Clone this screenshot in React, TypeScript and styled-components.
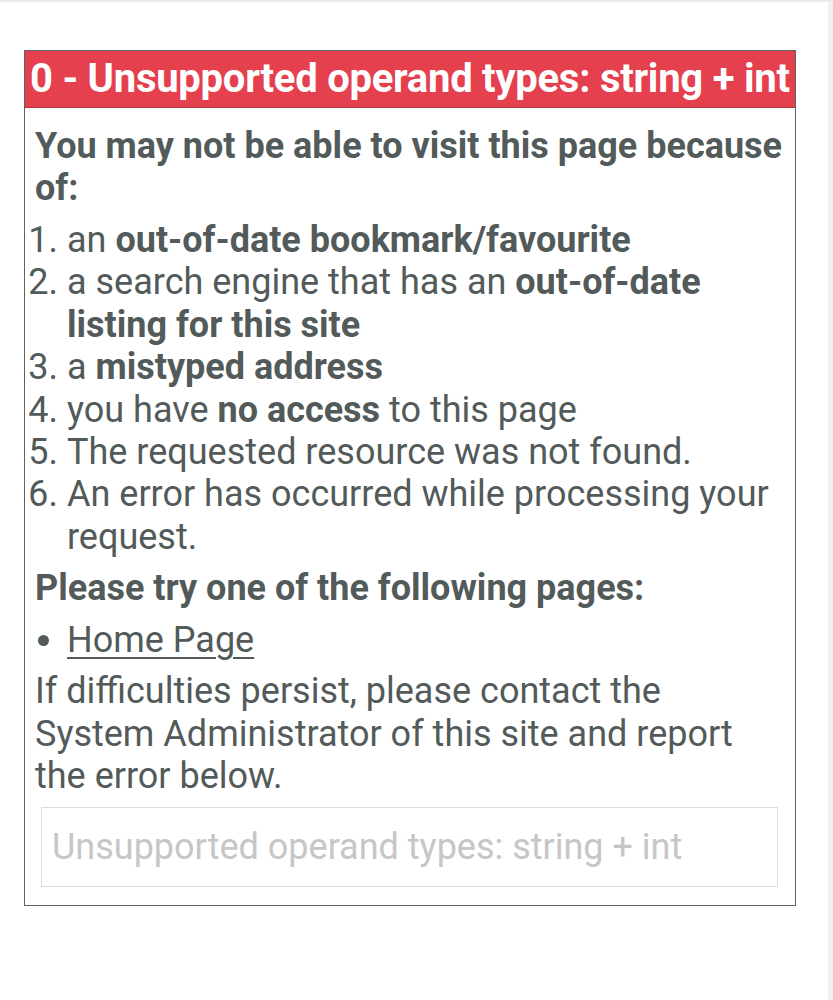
import styled, { createGlobalStyle } from 'styled-components';

const GlobalStyle = createGlobalStyle`
  html, body {
    margin: 0;
    padding: 0;
    background: #ffffff;
  }
  body {
    font-family: Roboto, "Liberation Sans", sans-serif;
  }
`;

const Page = styled.div`
  display: flex;
  min-height: 1000px;
  border-top: 2px solid #ebebeb;
  box-sizing: border-box;
`;

const Main = styled.div`
  flex: 1;
  padding: 48px 0 0 24px;
`;

const ScrollTrack = styled.div`
  width: 5px;
  background: #f1f1f1;
`;

const ErrorBox = styled.div`
  width: 772px;
  box-sizing: border-box;
  border: 1px solid #5f6363;
  color: #525a5a;
`;

const ErrorHeader = styled.div`
  background: #e5404d;
  color: #ffffff;
  font-weight: 700;
  font-size: 40px;
  letter-spacing: -0.25px;
  line-height: 56px;
  padding: 0 5px;
  white-space: nowrap;
  overflow: hidden;
  border-bottom: 1px solid #b8343f;
`;

const Content = styled.div`
  display: flex;
  flex-direction: column;
  gap: 9.1px;
  padding: 17px 10px 18px;
  font-size: 36px;
  line-height: 42.4px;
`;

const Lead = styled.p`
  margin: 0;
  font-weight: 700;
`;

const Reasons = styled.ol`
  margin: 0;
  padding-left: 32px;
`;

const Pages = styled.ul`
  margin: 0;
  padding-left: 32px;
`;

const PageLink = styled.a`
  color: inherit;
  text-decoration: underline;
  text-decoration-thickness: 2px;
  text-underline-offset: 5px;
`;

const Note = styled.p`
  margin: 0;
`;

const ErrorField = styled.input`
  display: block;
  box-sizing: border-box;
  width: calc(100% - 13px);
  height: 80px;
  margin: 0 7px 0 6px;
  padding: 0 10px;
  border: 1px solid #dcdcdc;
  font-family: Roboto, "Liberation Sans", sans-serif;
  font-size: 36px;
  color: #525a5a;
  background: #ffffff;
  outline: none;

  &::placeholder {
    color: #c6c6c6;
  }
`;

export default function App() {
  return (
    <>
      <GlobalStyle />
      <Page>
        <Main>
          <ErrorBox>
            <ErrorHeader>0 - Unsupported operand types: string + int</ErrorHeader>
            <Content>
              <Lead>You may not be able to visit this page because of:</Lead>
              <Reasons>
                <li>an <b>out-of-date bookmark/favourite</b></li>
                <li>a search engine that has an <b>out-of-date listing for this site</b></li>
                <li>a <b>mistyped address</b></li>
                <li>you have <b>no access</b> to this page</li>
                <li>The requested resource was not found.</li>
                <li>An error has occurred while processing your request.</li>
              </Reasons>
              <Lead>Please try one of the following pages:</Lead>
              <Pages>
                <li>
                  <PageLink href="#">Home Page</PageLink>
                </li>
              </Pages>
              <Note>
                If difficulties persist, please contact the System Administrator of this site and report the error below.
              </Note>
              <ErrorField readOnly placeholder="Unsupported operand types: string + int" />
            </Content>
          </ErrorBox>
        </Main>
        <ScrollTrack />
      </Page>
    </>
  );
}
